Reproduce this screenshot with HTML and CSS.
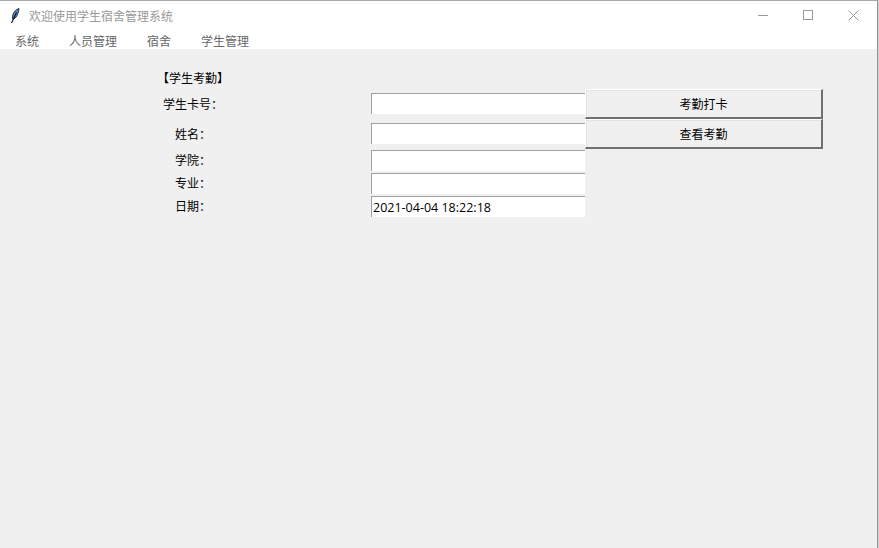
FILE: index.html
```html
<!DOCTYPE html>
<html lang="zh-CN">
<head>
  <meta charset="UTF-8">
  <title>欢迎使用学生宿舍管理系统</title>
  <link rel="stylesheet" href="styles.css">
</head>
<body>
  <div class="window">
    <div class="titlebar">
      <svg class="app-icon" width="10" height="16" viewBox="0 0 10 16">
        <path d="M9 0.5C5.5 1.5 3 4.5 2.5 8.5C2.4 9.8 2.6 10.8 3 11.3C6 10.5 8.5 6 9 0.5Z" fill="#4f86d0" stroke="#111" stroke-width="0.8"/>
        <path d="M6.5 4.5L1.5 15" stroke="#111" stroke-width="1.1" fill="none"/>
      </svg>
      <span class="title">欢迎使用学生宿舍管理系统</span>
      <div class="win-controls">
        <svg width="11" height="11" viewBox="0 0 11 11"><path d="M0 5.5H10" stroke="#999"/></svg>
        <svg width="11" height="11" viewBox="0 0 11 11"><rect x="0.5" y="0.5" width="9" height="9" fill="none" stroke="#999"/></svg>
        <svg width="11" height="11" viewBox="0 0 11 11"><path d="M0.5 0.5L10.5 10.5M10.5 0.5L0.5 10.5" stroke="#999"/></svg>
      </div>
    </div>
    <div class="menubar">
      <span>系统</span>
      <span>人员管理</span>
      <span>宿舍</span>
      <span>学生管理</span>
    </div>
    <div class="content">
      <div class="form">
        <div class="label label-head">【学生考勤】</div>

        <div class="label">学生卡号：</div>
        <input class="entry entry-tall" type="text">
        <button class="btn">考勤打卡</button>

        <div class="label">姓名：</div>
        <input class="entry entry-tall" type="text">
        <button class="btn">查看考勤</button>

        <div class="label">学院：</div>
        <input class="entry" type="text">

        <div class="label">专业：</div>
        <input class="entry" type="text">

        <div class="label">日期：</div>
        <input class="entry" type="text" value="2021-04-04 18:22:18">
      </div>
    </div>
  </div>
</body>
</html>
```

FILE: styles.css
```css
html, body {
  margin: 0;
  height: 100%;
}

body {
  background-color: #d8d8d8;
  font-family: "Noto Sans CJK SC", "Liberation Sans", sans-serif;
  font-size: 12px;
  overflow: hidden;
}

.window {
  display: flex;
  flex-direction: column;
  box-sizing: border-box;
  width: 878px;
  height: 548px;
  border-top: 1px solid #a8a8a8;
  border-right: 1px solid #8f8f8f;
  background-color: #f0f0f0;
}

.titlebar {
  display: flex;
  align-items: center;
  height: 30px;
  padding-left: 10px;
  background-color: #fff;
}

.app-icon {
  margin-right: 9px;
}

.title {
  padding-bottom: 2px;
  color: #999;
}

.win-controls {
  display: flex;
  gap: 34px;
  margin-left: auto;
  margin-right: 18px;
  margin-bottom: 2px;
}

.menubar {
  display: flex;
  gap: 30px;
  height: 18px;
  padding-left: 15px;
  line-height: 20px;
  color: #666;
  background-color: #fff;
}

.content {
  flex: 1;
  padding: 18px 0 0 150px;
}

.form {
  display: grid;
  grid-template-columns: 221px 214px 238px;
  grid-template-rows: 22px 30px 30px 23px 23px 23px;
  align-items: center;
  color: #000;
}

.label {
  grid-column: 1;
  width: 86px;
  padding-bottom: 2px;
  text-align: center;
}

.label-head {
  grid-column: 1 / 4;
}

.entry {
  grid-column: 2;
  box-sizing: border-box;
  width: 214px;
  height: 21px;
  margin: 0;
  padding: 1px 1px 0 1px;
  border: none;
  border-top: 1px solid #a0a0a0;
  border-left: 1px solid #a0a0a0;
  border-radius: 0;
  outline: none;
  background-color: #fff;
  color: #000;
  font-family: "Open Sans", "Liberation Sans", sans-serif;
  font-size: 12.5px;
}

.entry-tall {
  margin-bottom: 2px;
}

.btn {
  grid-column: 3;
  box-sizing: border-box;
  width: 238px;
  height: 30px;
  margin: 0;
  padding: 0;
  border: 1px solid #fff;
  border-right: 2px solid #707070;
  border-bottom: 2px solid #707070;
  border-radius: 0;
  box-shadow: inset 1px 1px 0 #e3e3e3;
  background-color: #f0f0f0;
  color: #000;
  font-family: inherit;
  font-size: 12px;
}
```
